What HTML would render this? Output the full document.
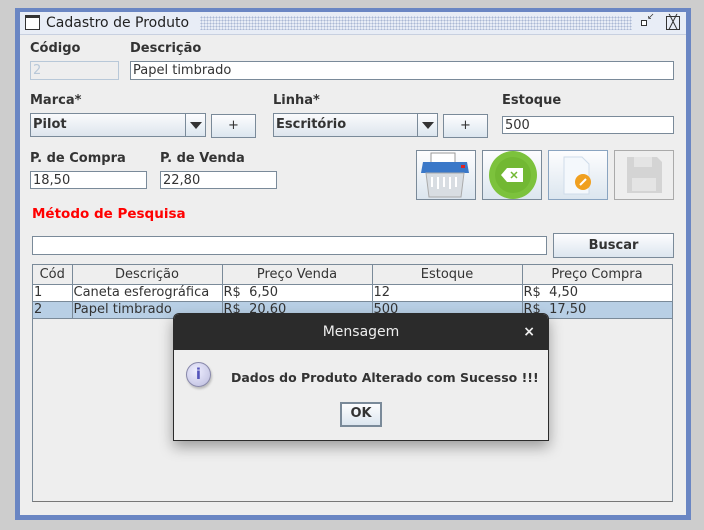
<!DOCTYPE html>
<html><head><meta charset="utf-8"><style>
*{box-sizing:border-box;margin:0;padding:0}
body{width:704px;height:530px;background:#cdcdcd;position:relative;overflow:hidden;font-family:"DejaVu Sans","Liberation Sans",sans-serif;font-size:13px;color:#333}
.a{position:absolute}
.lbl{position:absolute;font-weight:bold;font-size:13px;color:#333}
.fld{position:absolute;background:#fff;border:1px solid #7a8a99;font-size:13px;line-height:17px;padding-left:2px;color:#333}
.btn{position:absolute;border:1px solid #7a8a99;background:linear-gradient(#fdfdfe,#dce6ef);text-align:center}
.cmb{position:absolute;border:1px solid #7a8a99;background:linear-gradient(#fafbfc,#dde5ed);font-weight:bold;padding-left:2px;line-height:22px}
.cmb .ar{position:absolute;right:0;top:0;width:20px;height:22px;border-left:1px solid #7a8a99;background:linear-gradient(#fdfdfe,#dce6ef)}
.cmb .ar:after{content:"";position:absolute;left:4px;top:8px;border-left:6px solid transparent;border-right:6px solid transparent;border-top:7px solid #333}
td{border-right:1px solid #7a8a99;border-bottom:1px solid #7a8a99;height:16px;padding:0 1px;font-size:13px;line-height:16px;white-space:nowrap;overflow:hidden}
</style></head><body>
<div class="a" style="left:15px;top:8px;width:676px;height:512px;background:#6a86c3"></div>
<div class="a" style="left:20px;top:12px;width:666px;height:503px;background:#eeeeee"></div>
<div class="a" style="left:20px;top:12px;width:666px;height:23px;background:#e8edf6;border-bottom:1px solid #c8d0e0"></div>
<div class="a" style="left:200px;top:16px;width:432px;height:14px;background-image:radial-gradient(#aab8d4 0.8px,transparent 1px);background-size:3px 3px"></div>
<div class="a" style="left:25px;top:15px;width:15px;height:15px;border:1px solid #333;border-top-width:3px;background:#fff"></div>
<div class="a" style="left:46px;top:15px;font-size:14px;color:#222">Cadastro de Produto</div>
<div class="a" style="left:641px;top:20px;width:6px;height:6px;border:1px solid #333;background:#fff"></div>
<div class="a" style="left:647px;top:12px;font-size:9px">↙</div>
<div class="a" style="left:666px;top:16px;width:14px;height:14px;border:1px solid #333;font-size:13px;line-height:11px;text-align:center">╳</div>

<div class="lbl" style="left:30px;top:41px">Código</div>
<div class="lbl" style="left:130px;top:41px">Descrição</div>
<div class="fld" style="left:30px;top:61px;width:89px;height:19px;border-color:#b8c8d8;background:#eee;color:#b8c8d8">2</div>
<div class="fld" style="left:130px;top:61px;width:544px;height:19px">Papel timbrado</div>

<div class="lbl" style="left:30px;top:93px">Marca*</div>
<div class="lbl" style="left:273px;top:93px">Linha*</div>
<div class="lbl" style="left:502px;top:93px">Estoque</div>
<div class="cmb" style="left:30px;top:113px;width:176px;height:24px">Pilot<div class="ar"></div></div>
<div class="btn" style="left:211px;top:114px;width:45px;height:24px;line-height:22px">+</div>
<div class="cmb" style="left:273px;top:113px;width:165px;height:24px">Escritório<div class="ar"></div></div>
<div class="btn" style="left:443px;top:114px;width:45px;height:24px;line-height:22px">+</div>
<div class="fld" style="left:502px;top:116px;width:172px;height:18px">500</div>

<div class="lbl" style="left:30px;top:151px">P. de Compra</div>
<div class="lbl" style="left:160px;top:151px">P. de Venda</div>
<div class="fld" style="left:30px;top:171px;width:117px;height:18px">18,50</div>
<div class="fld" style="left:160px;top:171px;width:117px;height:18px">22,80</div>

<div class="btn" style="left:416px;top:150px;width:60px;height:50px">
<svg width="58" height="48"><rect x="14" y="2" width="24" height="12" fill="#fff" stroke="#999"/><path d="M6 11h44l2 11H4z" fill="#3a78c8"/><rect x="44" y="14" width="4" height="3" fill="#d22"/><path d="M9 22h38l-3 24H12z" fill="#d8dde2" stroke="#aaa"/><path d="M15 26v10M21 26v12M27 26v10M33 26v12M39 26v10" stroke="#fff" stroke-width="2"/></svg></div>
<div class="btn" style="left:482px;top:150px;width:60px;height:50px">
<svg width="58" height="48"><circle cx="30" cy="24" r="24" fill="#7cc23c"/><circle cx="30" cy="24" r="18" fill="#72b833"/><path d="M18 24l6-7h16v14H24z" fill="#fff"/><path d="M28 21l6 6M34 21l-6 6" stroke="#72b833" stroke-width="1.5"/></svg></div>
<div class="btn" style="left:548px;top:150px;width:60px;height:50px;border-color:#8aa4c0">
<svg width="58" height="48"><path d="M15 6h18l7 7v30H15z" fill="#f4f8fc" stroke="#cfdcea"/><circle cx="34" cy="31" r="8" fill="#f0a020"/><path d="M31 34l6-6" stroke="#fff" stroke-width="2"/></svg></div>
<div class="a" style="left:614px;top:150px;width:60px;height:50px;border:1px solid #aaa;background:#eee">
<svg width="58" height="48"><path d="M12 6h30l5 5v31H12z" fill="#d4d4d4"/><rect x="19" y="6" width="18" height="10" fill="#e4e4e4"/><rect x="17" y="27" width="24" height="13" fill="#e4e4e4"/></svg></div>

<div class="a" style="left:32px;top:206px;font-weight:bold;font-size:13.5px;color:#f00">Método de Pesquisa</div>
<div class="fld" style="left:32px;top:236px;width:515px;height:19px"></div>
<div class="btn" style="left:553px;top:233px;width:121px;height:25px;font-weight:bold;line-height:23px">Buscar</div>

<div class="a" style="left:32px;top:264px;width:641px;height:238px;background:#eee;border:1px solid #7a8a99;border-bottom-color:#777"></div>
<table class="a" style="left:33px;top:265px;border-collapse:collapse;table-layout:fixed;width:639px">
<tr style="background:#eee;text-align:center"><td style="width:39px;height:19px;line-height:19px">Cód</td><td style="width:150px;line-height:19px">Descrição</td><td style="width:150px;line-height:19px">Preço Venda</td><td style="width:150px;line-height:19px">Estoque</td><td style="width:150px;line-height:19px">Preço Compra</td></tr>
<tr style="background:#fff"><td>1</td><td>Caneta esferográfica</td><td>R$&nbsp; 6,50</td><td>12</td><td>R$&nbsp; 4,50</td></tr>
<tr style="background:#b8cfe5"><td>2</td><td>Papel timbrado</td><td>R$&nbsp; 20,60</td><td>500</td><td>R$&nbsp; 17,50</td></tr>
</table>

<div class="a" style="left:173px;top:313px;width:376px;height:128px;background:#eee;border:1px solid #2b2b2b;border-radius:6px 6px 0 0;box-shadow:0 6px 14px rgba(0,0,0,.35);overflow:hidden">
<div style="height:36px;background:#2b2b2b;color:#eee;text-align:center;line-height:36px;font-size:14px">Mensagem<span style="position:absolute;right:13px;top:0;font-weight:bold">×</span></div>
<div class="a" style="left:12px;top:48px;width:25px;height:25px;border-radius:50%;background:radial-gradient(circle at 40% 35%,#eef,#bbd);border:1px solid #88a;color:#55b;font-weight:bold;text-align:center;line-height:23px;font-size:15px;box-shadow:1px 2px 2px #bbb">i</div>
<div class="a" style="left:57px;top:56px;font-weight:bold;font-size:12.5px;color:#333">Dados do Produto Alterado com Sucesso !!!</div>
<div class="a" style="left:166px;top:88px;width:42px;height:25px;border:2px solid #7a8a99;background:linear-gradient(#fdfdfe,#dce6ef);font-weight:bold;text-align:center;line-height:20px">OK</div>
</div>
</body></html>
